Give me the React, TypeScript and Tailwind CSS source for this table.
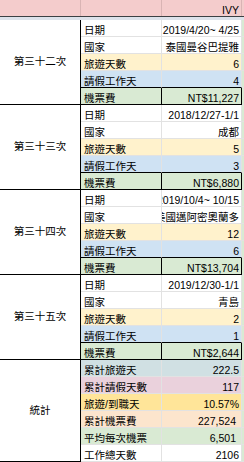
// 旅遊紀錄表 — Google Sheets 畫面
const trips = [
  { name: "第三十二次", date: "2019/4/20~ 4/25", place: "泰國曼谷巴提雅", days: "6", leave: "4", fare: "NT$11,227" },
  { name: "第三十三次", date: "2018/12/27-1/1", place: "成都", days: "5", leave: "3", fare: "NT$6,880" },
  { name: "第三十四次", date: "2019/10/4~ 10/15", place: "美國邁阿密奧蘭多", days: "12", leave: "6", fare: "NT$13,704" },
  { name: "第三十五次", date: "2019/12/30-1/1", place: "青島", days: "2", leave: "1", fare: "NT$2,644" },
];

const stats = [
  { label: "累計旅遊天", value: "222.5", bg: "bg-[#d0e0e3]", pad: "pr-[2px]" },
  { label: "累計請假天數", value: "117", bg: "bg-[#ead1dc]", pad: "pr-[2px]" },
  { label: "旅遊/到職天", value: "10.57%", bg: "bg-[#ffe599]", pad: "pr-[2px]" },
  { label: "累計機票費", value: "227,524", bg: "bg-[#fce5cd]", pad: "pr-[5px]" },
  { label: "平均每次機票", value: "6,501", bg: "bg-[#d9ead3]", pad: "pr-[5px]" },
  { label: "工作總天數", value: "2106", bg: "bg-white", pad: "pr-[2px]" },
];

type RowProps = {
  label: string;
  value: string;
  bg: string;
  bottom?: "gray" | "black";
  boxed?: boolean;
  pad?: string;
};

function Row({ label, value, bg, bottom = "gray", boxed = false, pad = "pr-[2px]" }: RowProps) {
  const b = bottom === "black" ? "border-b-black" : "border-b-[#e2e2e2]";
  const r = boxed ? "border-r-black" : "border-r-[#e2e2e2]";
  return (
    <div className="flex h-[17px]">
      <div className={`w-[81px] shrink-0 flex items-end pl-[3px] pb-[1px] border-b border-r ${b} ${r} ${bg}`}>
        <span className="whitespace-nowrap leading-none">{label}</span>
      </div>
      <div className={`w-[80px] shrink-0 flex items-end justify-end overflow-hidden ${pad} pb-[1px] border-b border-r ${b} ${r} ${bg}`}>
        <span className="whitespace-nowrap leading-none shrink-0">{value}</span>
      </div>
      <div className="flex-1 bg-[#d9ead3] border-b border-b-[#e2e2e2]" />
    </div>
  );
}

export default function App() {
  return (
    <div className="w-[244px] h-[462px] overflow-hidden bg-white text-[10.5px] text-black font-['Liberation_Sans','Noto_Sans_CJK_TC',sans-serif]">
      {/* 表頭 */}
      <div className="flex h-[16px] bg-[#f4cccc]">
        <div className="w-[81px] border-r border-r-[#d9b4b4]" />
        <div className="w-[81px] border-r border-r-[#d9b4b4]" />
        <div className="w-[80px] border-r border-r-[#d9b4b4] flex items-end justify-end pr-[2px] pb-[1px]">
          <span className="leading-none">IVY</span>
        </div>
        <div className="flex-1" />
      </div>
      <div className="h-[1px] bg-[#3c4043]" />
      <div className="h-[3px] bg-[#dde2ea]" />

      {/* 每次旅遊 */}
      {trips.map((t) => (
        <div key={t.name} className="flex">
          <div className="w-[81px] shrink-0 flex items-center justify-center border-r border-b border-black bg-white">
            <span className="whitespace-nowrap">{t.name}</span>
          </div>
          <div className="flex-1 flex flex-col">
            <Row label="日期" value={t.date} bg="bg-white" />
            <Row label="國家" value={t.place} bg="bg-white" />
            <Row label="旅遊天數" value={t.days} bg="bg-[#fff2cc]" />
            <Row label="請假工作天" value={t.leave} bg="bg-[#cfe2f3]" bottom="black" />
            <Row label="機票費" value={t.fare} bg="bg-[#d9ead3]" bottom="black" boxed />
          </div>
        </div>
      ))}

      {/* 統計 */}
      <div className="flex">
        <div className="w-[81px] shrink-0 flex items-center justify-center border-r border-b border-black bg-white">
          <span>統計</span>
        </div>
        <div className="flex-1 flex flex-col">
          {stats.map((s) => (
            <Row key={s.label} label={s.label} value={s.value} bg={s.bg} pad={s.pad} />
          ))}
        </div>
      </div>
    </div>
  );
}
